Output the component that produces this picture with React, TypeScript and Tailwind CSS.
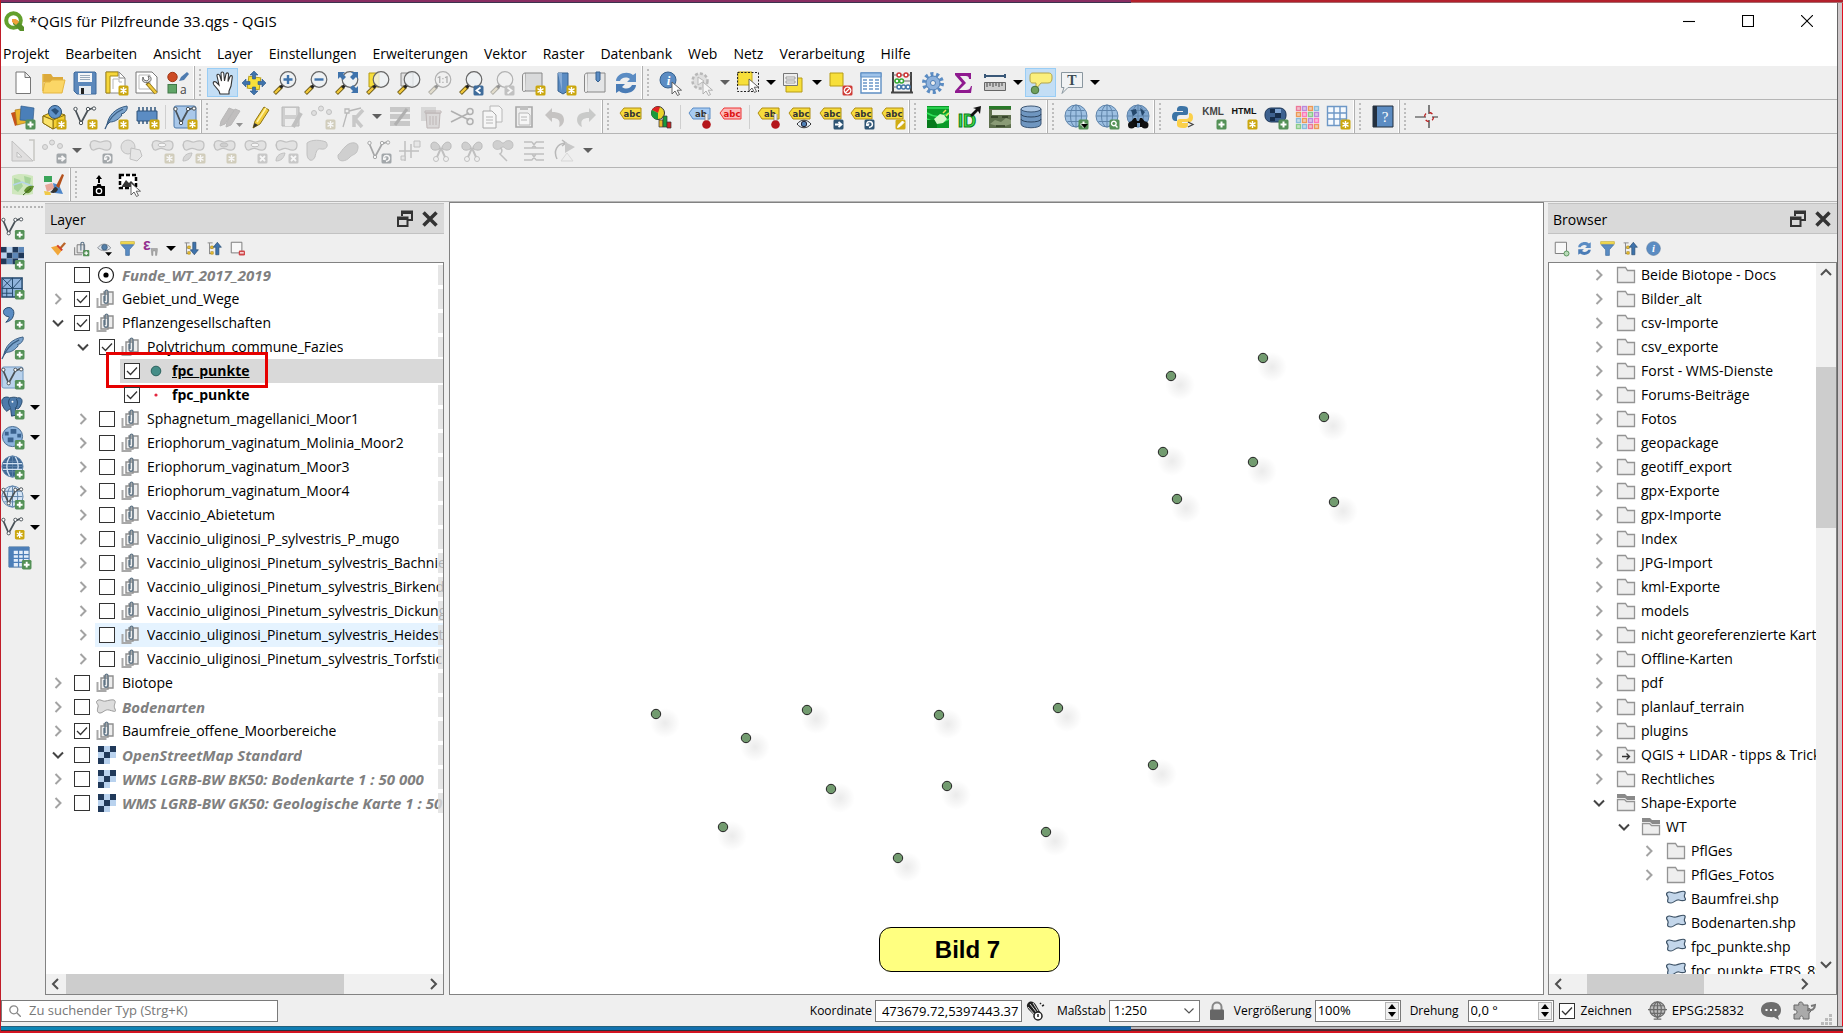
import React, { ReactNode } from 'react';

/* ---------- drawing helpers ---------- */

const BLUE = '#5b8cc3';
const NAVY = '#24476b';

type BadgeProps = { kind: 'plus' | 'star' | 'arrow' | 'cross' | 'turn' | 'pen' | 'prev' | 'next' | 'no' | 'lens' };

const badgeColors: Record<BadgeProps['kind'], string> = {
    plus: '#549157',
    star: '#cba70f',
    arrow: '#2f5574',
    cross: '#9a9a9a',
    turn: '#2f5574',
    pen: '#d0ac14',
    prev: '#3f6c9b',
    next: '#8a8a8a',
    no: '#cf3b36',
    lens: '#549157',
};

const badgeGlyphs: Record<BadgeProps['kind'], ReactNode> = {
    plus: <path d="M19.5 16.5v6M16.5 19.5h6" strokeWidth="2" />,
    star: <path d="M19.5 16v7M16.5 17.7l6 3.6M22.5 17.7l-6 3.6" strokeWidth="1.4" />,
    arrow: <path d="M16 19.5h6M19.5 16.8l3 2.7-3 2.7" strokeWidth="1.8" />,
    cross: <path d="M17 17l5 5M22 17l-5 5" strokeWidth="1.8" />,
    turn: <path d="M19 22.5c5-1 4-6 .5-6-3 0-3.5 3-1.5 4M19 18.5l-1 2-2-.5" strokeWidth="1.5" />,
    pen: <path d="M16.5 22.5l1-2.5 4-4 1.5 1.5-4 4z" strokeWidth="1" fill="#fff" />,
    prev: <path d="M21.5 16.5l-4 3 4 3" strokeWidth="1.8" />,
    next: <path d="M17.5 16.5l4 3-4 3" strokeWidth="1.8" />,
    no: <path d="M17.5 21.5l4-4M19.5 16.2a3.3 3.3 0 1 0 .1 0z" strokeWidth="1.2" />,
    lens: <path d="M18.8 16.2a2.3 2.3 0 1 0 .1 0zM20.5 20.5l2 2" strokeWidth="1.4" />,
};

const Badge = ({ kind }: BadgeProps) => (
    <g>
        <rect x="14.5" y="14.5" width="10" height="10" rx="1.5" fill={badgeColors[kind]} />
        <g stroke="#fff" fill="none">{badgeGlyphs[kind]}</g>
    </g>
);

const Lens = ({ children }: { children?: ReactNode }) => (
    <g>
        <path d="M8.5 15.5l-7 7" stroke="#6b5a18" strokeWidth="4" />
        <path d="M7 17l-5 5" stroke="#f3c93c" strokeWidth="2.4" />
        <path d="M10.5 13.5l-3 3" stroke="#222" strokeWidth="3" />
        <circle cx="15" cy="8.5" r="7.8" fill="#eef1f4" fillOpacity=".8" stroke="#666" strokeWidth="1.2" />
        {children}
    </g>
);

const Cursor = () => <path d="M13 11v12l3-3 2.5 4.5 2-1-2.3-4.3h4.3z" fill="#fff" stroke="#555" strokeWidth=".9" />;

const Tag = ({ fill = '#f6da3c', stroke = '#b08d10', color = '#333', text = 'abc' }) => (
    <g>
        <path d="M1 8l4-5h17v11H5z" fill={fill} stroke={stroke} />
        <text x="13" y="11.5" textAnchor="middle" fontSize="8.5" fontWeight="700" fill={color} className="font-['DejaVu_Sans',sans-serif]">{text}</text>
    </g>
);

const Pin = () => (
    <g>
        <path d="M18.5 9v9" stroke="#eee" strokeWidth="3" />
        <path d="M17 9v8M20 9v8" stroke="#888" strokeWidth=".8" />
        <circle cx="18.5" cy="19.5" r="4.3" fill="#b4161b" />
    </g>
);

const Vee = () => (
    <g fill="none" stroke="#4a5258" strokeWidth="1.8">
        <path d="M2 4l6 14 7-13 5-2" />
        <g fill="#fff" strokeWidth="1"><circle cx="2.5" cy="4" r="1.7" /><circle cx="8" cy="18" r="1.7" /><circle cx="15" cy="4" r="1.7" /><circle cx="21" cy="3.5" r="1.7" /></g>
    </g>
);

const Feather = () => <>
    <path d="M3 20C4 11 11 3 23 1c1 3-1 5-3 7l-3 1 1 1c-3 4-7 7-12 7z" fill="#7ba3cc" stroke="#395d83" />
    <path d="M1 24C4 16 10 8 19 4" fill="none" stroke="#395d83" strokeWidth="1.3" />
</>;

const Globe = ({ fill = '#9dc0e2' }) => (
    <g stroke="#5f84aa" fill="none">
        <circle cx="12" cy="11" r="11" fill={fill} />
        <path d="M12 .5v21M1.5 11h21M3.5 5.5h17M3.5 16.5h17" />
        <ellipse cx="12" cy="11" rx="5.5" ry="11" />
    </g>
);

const Blob = ({ y = 0 }) => (
    <path d={`M3 ${3 + y}c4-4 7 1 10 0s10-3 10 3-5 6-9 4-5 0-8 1-5-5-3-8z`} fill="#d3d3d3" stroke="#8b8b8b" strokeWidth="1.3" />
);

const D = '#20395a', M = '#5d87b8', L = '#b9d2ee';

const checker = (colors: string[], columns: number, cell: number) =>
    colors.map((c, i) => <rect key={i} x={(i % columns) * cell} y={1 + Math.floor(i / columns) * cell} width={cell} height={cell} fill={c} />);

const dots = <g fill="#ccc" stroke="#888"><circle cx="3" cy="8" r="2.5" /><circle cx="10" cy="3.5" r="2.5" /><circle cx="18" cy="7" r="2.5" /></g>;

/* ---------- toolbar icons, all on a 24 x 24 grid ---------- */

const icons: Record<string, ReactNode> = {
    new: <path d="M5 1h9l5.5 5.5V22.5H5zM14 1v5.5h5.5" fill="#fff" stroke="#777" />,
    open: <><path d="M1 3h8l2 3h10v5H1z" fill="#dca93a" /><path d="M1 3v19h19l3-13H10L8 11H3L1 20z" fill="#fbd666" stroke="#e5b640" /></>,
    save: <><path d="M2 1h20l1 1v21H4l-3-3V2z" fill="#5c88bb" stroke="#3f6a9c" /><path d="M5 2h14v9H5z" fill="#f4f6f8" /><path d="M7 4.5h10M7 6.5h10M7 8.5h10" stroke="#9ab" /><path d="M6 15h12v8H6z" fill="#e6ebf0" /><path d="M8 17h3v6H8z" fill="#222" /></>,
    newLayout: <><path d="M2 1h13l6 6v15H2z" fill="#fff" stroke="#888" /><path d="M2 1h12v4H6v17H2z" fill="#f6d63a" stroke="#a78a14" /><path d="M9 8h6v3h3M9 8v10" fill="none" stroke="#b5b5b5" /><path d="M15 1v6h6" fill="none" stroke="#888" /><Badge kind="star" /></>,
    layouts: <><path d="M1 1h16l5 5v16H1z" fill="#fff" stroke="#777" /><path d="M4 4h11v14H4z" fill="none" stroke="#bbb" /><path d="M12 12l9 10" stroke="#8a7014" strokeWidth="4" /><path d="M13 13l8 9" stroke="#f0c93c" strokeWidth="2.5" /><path d="M8 6l1 3 3 1 2-2-1-3c4 0 4 5 1 6-5 2-8-1-6-5z" fill="#ddd" stroke="#555" strokeWidth=".8" /></>,
    style: <><circle cx="6.5" cy="6" r="4.7" fill="#cd4b24" stroke="#a13615" /><rect x="2" y="13.5" width="8.5" height="8.5" fill="#60a568" stroke="#427848" /><path d="M13 10l2-4 6-5 2 2-5 6z" fill="#4f7cb0" /><text x="14" y="22.5" fontSize="12" fill="#444" className="font-['Open_Sans',sans-serif]">a</text></>,
    pan: <path d="M9 23l-1-3-5-6c-2-3 0-4 2-3l3 3L6 5c-.5-2 2-2.5 2.7-.6L10.5 10 10 2.5c0-2 2.5-2 2.800 0l.7 7.5L15 3c.5-1.8 2.7-1.3 2.5.5L17 10.5l2-5c.7-1.5 2.600-1 2.300.7L20 15l-2 5v3z" fill="#fff" stroke="#333" strokeWidth="1.1" />,
    panSel: <><path d="M6 6h12v12H6z" fill="#f7df3a" stroke="#b79c17" transform="rotate(8 12 12)" /><path d="M12 0l4 4h-2.5v4h-3V4H8zM12 24l4-4h-2.5v-4h-3v4H8zM0 12l4-4v2.5h4v3H4V16zM24 12l-4-4v2.5h-4v3h4V16z" fill="#3f73ac" stroke="#2a5686" strokeWidth=".6" /></>,
    zoomIn: <Lens><path d="M15 4v9M10.5 8.5h9" stroke="#3f73ac" strokeWidth="2.4" /></Lens>,
    zoomOut: <Lens><path d="M10.5 8.5h9" stroke="#3f73ac" strokeWidth="2.4" /></Lens>,
    zoomFull: <><Lens /><path d="M3 1h7L8 3l3 3-3 3-3-3-2 2zM23 1h-7l2 2-3 3 3 3 3-3 2 2zM23 22h-7l2-2-3-3 3-3 3 3 2-2z" fill="#3f73ac" /></>,
    zoomSel: <><path d="M3 2h10v14H3z" fill="#f7df3a" stroke="#b79c17" /><Lens /></>,
    zoomLayer: <><path d="M4 2h12v13H4z" fill="#e0e0e0" stroke="#888" /><Lens /></>,
    zoomNative: <Lens><text x="15" y="12" textAnchor="middle" fontSize="8.5" fontWeight="700" fill="#555" className="font-['Roboto',sans-serif]">1:1</text></Lens>,
    zoomPrev: <><Lens /><Badge kind="prev" /></>,
    zoomNext: <><Lens /><Badge kind="next" /></>,
    newMap: <><path d="M4 2h17v18H4z" fill="#d9dadb" stroke="#888" /><path d="M4 2c-2 0-2.5 2-2.5 3v14c0 2 3 2 3 0" fill="#eee" stroke="#888" /><Badge kind="star" /></>,
    newBookmark: <><path d="M6 2h10v18l-5 3-5-3z" fill={BLUE} stroke="#36618f" /><path d="M6 2h4v18" fill="#86abd6" /><Badge kind="star" /></>,
    bookmarks: <><path d="M4 2h18v19H4z" fill="#e4e5e6" stroke="#888" /><path d="M4 2c-2 0-2.5 2-2.5 3v15c0 2 3 2 3 0" fill="#eee" stroke="#888" /><path d="M13 1h4v8l-2 2-2-2z" fill={BLUE} stroke="#36618f" /></>,
    refresh: <><path d="M2 10C2 3 13-1 19 4l3-2v9h-9l3-3c-4-3-9-1-10 2z" fill={BLUE} /><path d="M22 14c0 7-11 11-17 6l-3 2v-9h9l-3 3c4 3 9 1 10-2z" fill="#4a7cb6" /></>,
    identify: <><circle cx="9" cy="9" r="8" fill={BLUE} stroke="#36618f" /><text x="9.5" y="14" textAnchor="middle" fontSize="13" fontStyle="italic" fontWeight="700" fill="#fff" className="font-['Liberation_Serif',serif]">i</text><Cursor /></>,
    action: <><circle cx="10" cy="10" r="7.5" fill="#ccc" stroke="#777" strokeWidth="2.5" strokeDasharray="3 2" /><path d="M8 6l6 4-6 4z" fill="#fff" stroke="#777" /><Cursor /></>,
    select: <><path d="M2 1h14v13H2z" fill="#f7df3a" stroke="#c7a91c" /><path d="M1.5 1.5h21v19h-21z" fill="none" stroke="#222" strokeDasharray="2 1.5" /><g transform="translate(0 -3)"><Cursor /></g></>,
    selectForm: <><path d="M8 7h12v14H4v-6" fill="#f7df3a" stroke="#b79c17" /><path d="M1.5 2.5h14v12h-14z" fill="#eee" stroke="#777" /><path d="M4 6h9v2H4zM4 10h9v2H4z" fill="#fff" stroke="#888" strokeWidth=".8" /></>,
    deselect: <><path d="M2 2h13v13H2z" fill="#f7df3a" stroke="#b79c17" /><Badge kind="no" /></>,
    table: <><path d="M2 2h20v20H2z" fill="#fff" stroke="#5f8fc4" strokeWidth="1.4" /><path d="M2 2h20v4H2z" fill="#9fc3ea" stroke="#5f8fc4" /><path d="M4 9h4M10 9h4M16 9h4M4 12h4M10 12h4M16 12h4M4 15h4M10 15h4M16 15h4M4 18h4M10 18h4M16 18h4" stroke="#6b97c8" strokeWidth="1.3" /></>,
    abacus: <><path d="M3 1v20M21 1v20M1 21.5h22" stroke="#444" strokeWidth="2" /><path d="M3 4h18M3 10h18M3 16h18" stroke="#666" /><g fill="#fff" strokeWidth="1.5"><g stroke="#c33"><circle cx="9" cy="4" r="2" /><circle cx="16" cy="4" r="2" /></g><g stroke="#3a3"><circle cx="7" cy="10" r="2" /><circle cx="11.5" cy="10" r="2" /></g><g stroke="#47a"><circle cx="9" cy="16" r="2" /><circle cx="13.5" cy="16" r="2" /><circle cx="18" cy="16" r="2" /></g></g></>,
    gear: <><circle cx="12" cy="12" r="9" fill="none" stroke={BLUE} strokeWidth="4" strokeDasharray="3 2.655" /><circle cx="12" cy="12" r="7" fill="#8db1dc" stroke="#4c7db5" /><circle cx="12" cy="12" r="2.5" fill="#efefef" stroke="#4c7db5" /></>,
    sigma: <path d="M3 2h16v6h-2c0-2-1-3-3-3H8l6 7-7 7h7c3 0 4-1 5-4h1l-1 7H3v-2l7-8-7-8z" fill="#8f1a8f" />,
    measure: <><path d="M2 5h20M2 3v4M22 3v4" stroke="#3a5878" strokeWidth="2" /><path d="M1.5 11.5h21v8h-21z" fill="#ccc" stroke="#666" /><path d="M4 12v4M7 12v3M10 12v4M13 12v3M16 12v4M19 12v3" stroke="#444" /></>,
    mapTip: <><path d="M4 2h15c4 0 4 2 4 5s-1 5-4 5h-7l-5 6V12H4c-3 0-3-2-3-5s0-5 3-5z" fill="#fbef7c" stroke="#b3a44b" /><circle cx="6" cy="19" r="3.8" fill="#6fa05c" stroke="#47703b" /></>,
    annotation: <><path d="M1.5 1.5h21v15H8l-6 6 2-6H1.5z" fill="#f1f3f4" stroke="#8a979f" /><text x="12" y="14" textAnchor="middle" fontSize="14" fontWeight="700" fill="#3a4a54" className="font-['Liberation_Serif',serif]">T</text></>,

    dataSource: <><path d="M0 8l10-3 3 12-9 4z" fill="#c7521b" /><path d="M4 5l12-2 2 14-12 3z" fill="#ecb52d" stroke="#a9781a" strokeWidth=".7" /><path d="M10 1l13 2-1 13-13-1z" fill="#4a7fb9" stroke="#2f5b8c" strokeWidth=".7" /><Badge kind="plus" /></>,
    geopackage: <><path d="M1 11l11-5 11 4v8l-12 6-10-6z" fill="#f4cf32" stroke="#8a7010" /><circle cx="13" cy="7" r="6.5" fill="#5f92c8" stroke="#2a5078" /><path d="M9 5l4-2 4 3-3 4z" fill="#2a5078" /><path d="M1 11l10 4 12-5M11 15v9" fill="none" stroke="#8a7010" /><path d="M1 11l10 4v9L1 18z" fill="#fbe36a" stroke="#8a7010" /><Badge kind="star" /></>,
    shapefile: <><Vee /><Badge kind="star" /></>,
    spatialite: <><Feather /><Badge kind="star" /></>,
    memory: <><path d="M4 2v17M8 2v17M12 2v17M16 2v17M20 2v17" stroke="#31557c" strokeWidth="1.5" /><path d="M2 6h20v10H2z" fill={BLUE} stroke="#31557c" /><Badge kind="star" /></>,
    virtual: <><rect x="1" y="1" width="22" height="22" rx="2" fill="#a9c8ea" stroke="#4c79a9" /><Vee /><Badge kind="star" /></>,
    pencils: <><path d="M2 21l1-5L11 3l5 2-9 14zM8 22l1-5 8-13 5 2-9 14z" fill="#8d8484" stroke="#7a7272" /><path d="M18 18h7l-3.5 4z" fill="#222" /></>,
    edit: <><path d="M4 23l2-7L15 2l5 3-9 14z" fill="#f2cd3a" stroke="#8e7413" /><path d="M4 23l1.5-5 3.5 2z" fill="#333" /><path d="M8 17l9-14" stroke="#fff3a5" strokeWidth="1.5" /></>,
    saveEdits: <><path d="M2 2h17v19H2z" fill="#aaa" stroke="#777" /><path d="M5 3h11v7H5zM5 14h10v7H5z" fill="#eee" /><path d="M13 22l8-14" stroke="#888" strokeWidth="4" /></>,
    addPoint: <>{dots}<Badge kind="star" /></>,
    vertex: <><path d="M3 4h4v4H3zM5 8L1 22M7 6l12-3" fill="none" stroke="#777" strokeWidth="1.3" /><path d="M21 5L12 15M12 10v12M13 14l7 8" stroke="#999" strokeWidth="3.5" /></>,
    modify: <><path d="M2 2h20v5H2zM2 9h20v5H2zM2 16h20v5H2z" fill="#999" /><path d="M7 20L19 4" stroke="#666" strokeWidth="3" /></>,
    trash: <><path d="M2 2h15v14H2z" fill="#bbb" /><path d="M7 8h14l-1 15H8z" fill="#cbb" stroke="#a66" /><path d="M6 6h16v2H6zM11 11v9M14 11v9M17 11v9" stroke="#a66" fill="none" /></>,
    cut: <><path d="M1 6l18 9M1 17l18-9" stroke="#666" strokeWidth="1.6" /><circle cx="20" cy="6.5" r="3" fill="none" stroke="#666" strokeWidth="1.5" /><circle cx="20" cy="16.5" r="3" fill="none" stroke="#666" strokeWidth="1.5" /></>,
    copy: <><path d="M9 1h9l3 3v13H9z" fill="#fff" stroke="#777" /><path d="M2 6h9l4 4v13H2z" fill="#fff" stroke="#555" /><path d="M5 12h7M5 15h7M5 18h7" stroke="#777" /></>,
    paste: <><path d="M4 2h16v20H4z" fill="#eee" stroke="#555" strokeWidth="1.6" /><path d="M8 1h8v4H8z" fill="#888" /><path d="M7 8h9l2 2v10H7z" fill="#fff" stroke="#777" /><path d="M9 12h6M9 15h6" stroke="#777" /></>,
    undo: <path d="M2 10l7-7v4c7 0 12 2 12 8 0 3-2 6-5 7 2-7-1-9-7-9v4z" fill="#a08c80" />,
    redo: <path d="M22 10l-7-7v4C8 7 3 9 3 15c0 3 2 6 5 7-2-7 1-9 7-9v4z" fill="#9aa096" />,
    label: <Tag />,
    diagram: <><circle cx="8" cy="8" r="6.5" fill="#e9d32a" stroke="#333" /><path d="M8 8L2 5a6.5 6.5 0 0 1 8-3z" fill="#d22" /><path d="M8 8v6.5A6.5 6.5 0 0 1 2 5z" fill="#1a9a3c" /><path d="M9 15h4v7H9z" fill="#e9b72a" stroke="#333" strokeWidth=".7" /><path d="M13 11h4v11h-4z" fill="#1a9a3c" stroke="#333" strokeWidth=".7" /><path d="M17 17h4v6h-4z" fill="#c22" stroke="#333" strokeWidth=".7" /></>,
    labelBlue: <><Tag fill="#a7cbf2" stroke="#5a8cc6" text="ab" /><Pin /></>,
    labelRed: <Tag fill="#fbb9b9" stroke="#e33" color="#d11" />,
    labelPin: <><Tag text="ab" /><Pin /></>,
    labelShow: <><Tag /><path d="M9 19c4-5 10-5 14 0-4 5-10 5-14 0z" fill="#e8f0f8" stroke="#333" /><circle cx="16" cy="19" r="2.7" fill="#4f7fb4" stroke="#223" /></>,
    labelMove: <><Tag /><Badge kind="arrow" /></>,
    labelTurn: <><Tag /><Badge kind="turn" /></>,
    labelEdit: <><Tag /><Badge kind="pen" /></>,
    plug: <><path d="M1 1h22v22H1z" fill="#0a9a28" /><path d="M1 3h22M1 8c8 5 14 4 22 0M1 14c8 5 14 4 22 0" stroke="#32e05a" fill="none" strokeWidth="1.5" /><path d="M1 15h10v8H1z" fill="#067a1c" /><path d="M8 14l6-5 4 1 3 4-4 4-6 1z" fill="#d5f6c9" /><path d="M17 8l3-3M20 11l3-3" stroke="#e8e05a" strokeWidth="1.5" /></>,
    idTool: <><text x="1" y="22" fontSize="18" fontWeight="700" fill="#3fe04c" stroke="#0a7a1b" strokeWidth="1" className="font-['Liberation_Sans',sans-serif]">ID</text><path d="M13 10l6-6-3-1 8-2-1 8-2-3-6 6z" fill="#111" /></>,
    forest: <><path d="M1 1h22v22H1z" fill="#5d6f4d" /><path d="M1 1h22v3H1z" fill="#2a7a2a" /><path d="M4 5h19v5H4z" fill="#e5e8e0" /><path d="M2 19l5-4 6 2 5-4 5 2v4l-9 3z" fill="#8a9b76" /><path d="M3 12h7M14 12h6M8 21h9" stroke="#2c3b22" strokeWidth="1.5" /></>,
    database: <><path d="M2 4v15c0 5 20 5 20 0V4z" fill="#6f96c0" stroke="#3a5574" /><ellipse cx="12" cy="4" rx="10" ry="3" fill="#a9c4e2" stroke="#3a5574" /><path d="M2 9c0 4 20 4 20 0M2 14c0 4 20 4 20 0" fill="none" stroke="#2c4460" /></>,
    globeAdd: <><Globe /><Badge kind="plus" /><path d="M17 19h7l-3.5 4z" fill="#000" /></>,
    globeFind: <><Globe /><Badge kind="lens" /></>,
    globeBino: <><Globe fill="#7fa6cf" /><path d="M5 5l5-1 1 4-4 3zM14 3l5 4-3 4z" fill="#24476b" /><path d="M4 18l4-5h2l1 3h2l1-3h2l4 5v4h-6v-4h-3v4H4z" fill="#0c0c0c" /><circle cx="5.5" cy="20" r="3.5" fill="#111" /><circle cx="19" cy="20" r="3.5" fill="#111" /></>,
    python: <><path d="M11 1c-5 0-5 2-5 5h6v1H4c-4 0-4 9 0 9h2v-3c0-2 1-3 3-3h6c2 0 2-1 2-3V4c0-2-2-3-6-3z" fill="#3c74a6" /><path d="M12 23c5 0 5-2 5-5h-6v-1h8c4 0 4-9 0-9h-1v3c0 2-1 3-3 3H9c-2 0-3 1-3 3v3c0 2 2 3 6 3z" fill="#fbd04a" /><path d="M17 17l5 2.5-5 2.5" fill="none" stroke="#444" strokeWidth="1.3" /></>,
    kml: <><text x="11" y="10" textAnchor="middle" fontSize="10" fontWeight="700" fill="#444" className="font-['Liberation_Sans',sans-serif]">KML</text><Badge kind="plus" /></>,
    html: <><text x="11" y="9" textAnchor="middle" fontSize="9" fontWeight="700" fill="#111" className="font-['Liberation_Sans',sans-serif]">HTML</text><Badge kind="star" /></>,
    mask: <><rect x="1" y="3" width="21" height="14" rx="6" fill="#3d618f" stroke="#1d3657" /><path d="M6 4h5v4H6zM11 8h6v5h-6zM6 12h5v4H6z" fill="#162e4c" /><path d="M11 4h6v4h-6z" fill="#7ea4d2" /><Badge kind="plus" /></>,
    tiles: <g strokeWidth="1.3" fill="#fff">{['#e79', '#b8d', '#e95', '#8bd', '#e95', '#f7b', '#8c8', '#b8d', '#8bd', '#e95', '#b8d', '#f7b', '#8c8', '#8bd', '#e79', '#e95'].map((c, i) => <rect key={i} x={1.5 + (i % 4) * 6} y={1.5 + Math.floor(i / 4) * 6} width="4" height="4" stroke={c} fill={c} fillOpacity=".4" />)}</g>,
    gridNew: <><path d="M1.5 1.5h19v19h-19zM8 1.5v19M14 1.5v19M1.5 8h19M1.5 14h19" fill="#f5f9fd" stroke="#6d97c6" strokeWidth="1.4" /><Badge kind="star" /></>,
    help: <><path d="M2 1h20v21H2z" fill="#5c8cc2" stroke="#222e3c" /><path d="M2 1h4v21H2z" fill="#24303f" /><text x="14" y="17" textAnchor="middle" fontSize="15" fill="#fff" className="font-['Liberation_Serif',serif]">?</text></>,
    cross: <><path d="M13 0v9M13 15v8M-1 12H10M16 12h6" stroke="#333" strokeWidth="1.2" /><circle cx="13" cy="12" r="4.5" fill="none" stroke="#b22" strokeWidth="1.3" strokeDasharray="3.5 3.5" /></>,

    triangle: <><path d="M1 2v20h21z" fill="#d9caca" stroke="#888" /><path d="M6 13v5h5z" fill="#efefef" stroke="#888" /><path d="M18 1h5v21" fill="none" stroke="#997" strokeWidth="1.5" /></>,
    movePoint: <>{dots}<Badge kind="arrow" /></>,
    rotate: <><Blob /><Badge kind="turn" /></>,
    simplify: <><circle cx="9" cy="8" r="7" fill="#ccc" stroke="#888" /><path d="M12 9l9 2 2 6-5 5-7-2z" fill="#ddd" stroke="#888" /></>,
    ring: <><Blob /><ellipse cx="12" cy="6" rx="4" ry="1.800" fill="#fff" stroke="#888" /><Badge kind="star" /></>,
    part: <><Blob /><path d="M2 22c0-6 5-8 9-8-1 5-4 8-9 8z" fill="#bbb" stroke="#888" /><Badge kind="star" /></>,
    fillRing: <><Blob /><ellipse cx="12" cy="6" rx="4" ry="2" fill="#aaa" stroke="#888" /><Badge kind="star" /></>,
    delRing: <><Blob /><ellipse cx="12" cy="6" rx="4" ry="1.800" fill="#fff" stroke="#888" /><Badge kind="cross" /></>,
    delPart: <><Blob /><path d="M2 22c0-6 5-8 9-8-1 5-4 8-9 8z" fill="#bbb" stroke="#888" /><Badge kind="cross" /></>,
    reshape: <path d="M2 4c5-4 14-3 19-1 3 4 0 8-5 7-4-1-5 3-6 8-3 6-8 3-8-3z" fill="#bbb" stroke="#888" />,
    offset: <path d="M2 16c3-2 4-6 8-9 5-5 13-4 12 2-1 7-5 6-8 9-4 5-13 6-12-2z" fill="#aaa" stroke="#888" />,
    splitParts: <><Vee /><Badge kind="turn" /></>,
    split: <><path d="M7 2v20M1 12h20M13 5v14" stroke="#888" strokeWidth="1.5" /><path d="M16 2h6v6h-6zM3 17h4v4H3z" fill="#ddd" stroke="#888" /></>,
    scissors: <><path d="M11 8C8 1 1 2 2 8c0 4 7 4 9 1zM13 8c3-7 10-6 9 0 0 4-7 4-9 1z" fill="#aaa" stroke="#777" /><path d="M12 9l-4 9M12 9l4 9" stroke="#888" strokeWidth="2" /><circle cx="7" cy="20" r="2.5" fill="none" stroke="#888" /><circle cx="17" cy="20" r="2.5" fill="none" stroke="#888" /></>,
    merge: <><path d="M2 6c0-6 8-5 9-2h2c1-3 9-4 9 2s-8 5-9 2h-2c-1 3-9 4-9-2z" fill="#aaa" stroke="#888" /><path d="M9 9c3 1 2 5 0 6l7 7" fill="none" stroke="#888" strokeWidth="1.5" /></>,
    lines: <path d="M2 3h8M14 3h8M2 9h20M2 15h20M2 21h8M14 21h8M10 3l4 6M14 3l-4 6M10 15l4 6M14 15l-4 6" stroke="#888" strokeWidth="1.4" />,
    rotSym: <><path d="M4 20C0 12 4 5 12 4M9 1l4 3-4 3" fill="none" stroke="#777" strokeWidth="1.5" /><path d="M12 3l10 5-10 6z" fill="#999" /><path d="M8 22l6-8 6 8z" fill="#eee" stroke="#bbb" /></>,

    osm: <><path d="M1 3c6-3 14-2 21 0v18c-7 2-14 1-21 0z" fill="#cfe7bd" /><path d="M3 5l6 2 3 6-5 6-4-3zM13 3l7 2-1 6-5-1z" fill="#a7d39a" /><path d="M2 12l9-3 10 4" fill="none" stroke="#b5d4e8" strokeWidth="1.5" /><path d="M13 18c2-5 6-6 10-5-2 6-5 8-8 7z" fill="#5f8f2e" /><path d="M12 22l8-7" stroke="#3c5f1b" /></>,
    palette: <><path d="M2 3h8v6H2z" fill="#3aa55a" /><path d="M3 12l7-2 3 5-8 4z" fill="#e8a79a" /><path d="M11 10l6 2 4 9-8-1z" fill="#4d86c9" /><path d="M2 18l6 1 1 3H3z" fill="#f0c945" /><path d="M8 19c3-1 3-5 6-5l2 2c-1 4-5 5-8 3z" fill="#333" /><path d="M14 13l6-12 2 1-5 13z" fill="#b5521d" /></>,
    camera: <><path d="M12 2l3 4h-2v4h-2V6H9z" /><path d="M9.500 13l1-2h3l1 2h3.500v10H6V13z" /><circle cx="12" cy="18" r="3.3" fill="#fff" /><circle cx="12" cy="18" r="2" /></>,
    pickImage: <><path d="M2 2h16v13H2z" fill="#fff" stroke="#000" strokeWidth="2.5" strokeDasharray="4 2" /><path d="M4 13l4-6 3 3 2-2 4 4v2H4z" fill="#333" /><g transform="translate(0 -1)"><Cursor /></g></>,

    vecAdd: <><Vee /><Badge kind="plus" /></>,
    rasAdd: <>{checker([D, L, D, M, L, D, M, D, D, M, D, L], 4, 6)}<Badge kind="plus" /></>,
    meshAdd: <><path d="M1 2h21v20H1z" fill="#8fb3dc" stroke="#24476b" strokeWidth="1.5" /><path d="M1 13h21M12 2v20M1 2l11 11M12 2L1 13M22 2L12 13M6 13v9M1 18h11" stroke="#24476b" fill="none" /><Badge kind="plus" /></>,
    commaAdd: <><path d="M4 3c6-4 11 1 9 7-1 4-4 6-8 7 3-3 4-5 3-6C3 11 1 6 4 3z" fill={BLUE} stroke={NAVY} /><Badge kind="plus" /></>,
    featherAdd: <><Feather /><Badge kind="plus" /></>,
    virtualAdd: <><rect x="1" y="1" width="22" height="22" rx="2" fill="#b9d2ec" stroke="#6f95bf" /><Vee /><Badge kind="plus" /></>,
    postgisAdd: <><path d="M1 4c2-4 7-3 8-2 3-1 6-1 8 0 5-1 6 3 4 7s-3 5-5 4l-1-1 1 8-5 1-1-8-4 3C3 14 0 8 1 4z" fill="#4d7aaa" stroke={NAVY} /><path d="M9 3c-2 3-1 6 1 9M16 3c2 3 1 6 0 9" fill="none" stroke={NAVY} /><circle cx="12" cy="6" r="1" fill="#fff" /><Badge kind="plus" /></>,
    wmsAdd: <><circle cx="12" cy="11" r="10.5" fill="#8db4dd" stroke="#44698f" /><path d="M4 6h4v4H4zM10 3h6v5h-6zM17 8h4v4h-4zM7 12h6v5H7z" fill="#3b628e" /><Badge kind="plus" /></>,
    wcsAdd: <><Globe fill="#3a6491" /><path d="M2 8h20M2 14h20M9 1c-4 6-4 14 0 20M15 1c4 6 4 14 0 20" fill="none" stroke="#cfe0f2" strokeWidth="1.3" /><Badge kind="plus" /></>,
    wfsAdd: <><Globe fill="#d6e5f5" /><Vee /><Badge kind="plus" /></>,
    vecNew: <><Vee /><Badge kind="star" /></>,
    tableAdd: <><path d="M1 1h21v21H1z" fill="#e4eefa" stroke="#3f6c9b" /><path d="M1 1h21v4H1zM1 1h5v21H1z" fill="#4d7fb8" /><path d="M11 1v21M16 1v21M1 9h21M1 13h21M1 17h21" stroke="#4d7fb8" strokeWidth="1.3" /><Badge kind="plus" /></>,

    broom: <><path d="M13 11l8-9 3 2-8 9z" fill="#b9642a" /><path d="M0 10l11-3 7 7-7 9z" fill="#f1a73a" /><path d="M10 7l8 8" stroke="#d2402c" strokeWidth="3" /></>,
    groupAdd: <><path d="M5 6h12v13H5z" fill="#e5e5e5" stroke="#777" strokeWidth="1.5" /><path d="M11 15V5c0-4 5-4 5 0v12" fill="none" stroke="#5c7388" strokeWidth="1.8" /><path d="M1 10v12h12" fill="none" stroke="#888" strokeWidth="1.8" /><Badge kind="plus" /></>,
    eye: <><path d="M1 11c6-8 15-8 21 0-6 6-15 6-21 0z" fill="#dfe6ee" stroke="#8a8f95" strokeWidth="1.5" /><circle cx="12" cy="10" r="4.5" fill="#547fa8" stroke="#33526f" /><path d="M13 18h11l-5.5 6z" fill="#000" /></>,
    funnel: <><path d="M1 1h22v4H1z" fill="#f6dd55" stroke="#bfa62f" /><path d="M2 6h20l-7 8v9H9v-9z" fill={BLUE} stroke="#3a689c" /></>,
    epsilon: <><text x="0" y="15" fontSize="26" fontWeight="700" fill="#93308f" className="font-['Liberation_Sans',sans-serif]">ε</text><path d="M13 12h10v3l-1 8h-2v-7h-4v7h-2z" fill="#aaa" stroke="#777" strokeWidth=".6" /></>,
    expand: <><path d="M1 3h8M4 3v18M4 11h5M4 20h5" stroke="#888" strokeWidth="1.5" fill="none" /><path d="M6 8h4v4H6zM6 17h4v4H6z" fill="#f2c632" stroke="#a9861a" /><path d="M14 2h5v12h4l-6.5 8L10 14h4z" fill="#3f73ac" stroke="#24476b" /></>,
    collapse: <><path d="M1 3h8M4 3v18M4 11h5M4 20h5" stroke="#888" strokeWidth="1.5" fill="none" /><path d="M6 8h4v4H6zM6 17h4v4H6z" fill="#f2c632" stroke="#a9861a" /><path d="M14 22h5V10h4L16.5 2 10 10h4z" fill="#3f73ac" stroke="#24476b" /></>,
    removeLayer: <><path d="M2 2h17v17H2z" fill="#f8f8f8" stroke="#777" strokeWidth="1.5" /><rect x="14" y="15" width="10" height="8" rx="2" fill="#d0474a" /><path d="M16 19h6" stroke="#fff" strokeWidth="2" /></>,
    addLayer: <><path d="M2 2h18v18H2z" fill="#f8f8f8" stroke="#777" strokeWidth="1.5" /><circle cx="20" cy="20" r="4" fill="#b9dbb9" stroke="#549157" strokeWidth="1.5" /></>,
    info: <><circle cx="12" cy="12" r="11" fill={BLUE} stroke="#5a7ba0" /><text x="12" y="18" textAnchor="middle" fontSize="17" fontStyle="italic" fontWeight="700" fill="#fff" className="font-['Liberation_Serif',serif]">i</text></>,
};

const Glyph = ({ name, className = 'size-6' }: { name: string; className?: string }) => (
    <svg viewBox="0 0 24 24" className={`${className} shrink-0 overflow-visible`} aria-hidden="true">{icons[name]}</svg>
);

const DropArrow = () => <svg viewBox="0 0 10 5" className="h-[5px] w-[10px]"><path d="M0 0h10L5 5z" /></svg>;

/* ---------- toolbars ---------- */

// '|' starts a new toolbar, ':' is a thin separator, 'v' a drop-down arrow,
// a leading '-' is a disabled tool and a leading '*' a pressed one
const rows = [
    'new open save newLayout layouts style | *pan panSel zoomIn zoomOut zoomFull zoomSel zoomLayer -zoomNative zoomPrev -zoomNext newMap newBookmark bookmarks refresh | identify -action -v select v selectForm v deselect table abacus gear sigma measure v *mapTip annotation v',
    'dataSource geopackage shapefile spatialite memory : virtual | -pencils edit -saveEdits -addPoint -vertex -v -modify -trash -cut -copy -paste -undo -redo | label diagram : labelBlue labelRed : labelPin labelShow labelMove labelTurn labelEdit | plug idTool forest database | globeAdd globeFind globeBino | python kml html mask tiles gridNew | help | cross',
    '-triangle -movePoint -v -rotate -simplify -ring -part -fillRing -delRing -delPart -reshape -offset -splitParts -split -scissors -scissors -merge -lines -rotSym -v',
    'osm palette | camera pickImage',
];

const ToolItem = ({ item }: { item: string }) => {
    if (item === '|') {
        return <span className="flex h-full w-[14px] items-center gap-1 border-l border-white">
            <span className="h-full w-px bg-[#b0b0b0]" />
            <span className="h-[27px] border-l-2 border-dotted border-[#bdbdbd]" />
        </span>;
    }
    if (item === ':') return <span className="mx-[3px] h-6 w-px bg-[#cfcfcf]" />;

    const disabled = item.startsWith('-');
    const pressed = item.startsWith('*');
    const name = item.replace(/^[-*]/, '');
    if (name === 'v') {
        return <button aria-label="Mehr" disabled={disabled} className="flex w-[15px] justify-center disabled:opacity-60"><DropArrow /></button>;
    }
    return <button
        aria-label={name}
        aria-pressed={pressed}
        disabled={disabled}
        className={`flex h-[29px] w-[31px] items-center justify-center disabled:opacity-45 disabled:grayscale-75 ${pressed ? 'border border-[#99cdf5] bg-[#c3def5]' : ''}`}
    >
        <Glyph name={name} />
    </button>;
};

const sideTools = ['vecAdd', 'rasAdd', 'meshAdd', 'commaAdd', 'featherAdd', 'virtualAdd', 'postgisAdd v', 'wmsAdd v', 'wcsAdd', 'wfsAdd v', 'vecNew v', 'tableAdd'];

const SideBar = () => (
    <div className="flex w-11 shrink-0 flex-col">
        <div className="mx-[2px] mt-1 mb-1 border-t-2 border-dotted border-[#b5b5b5]" />
        {sideTools.map((tool) => {
            const [name, menu] = tool.split(' ');
            return <div key={name} className={`flex h-[30px] items-center gap-[6px] ${name === 'tableAdd' ? 'pl-[7px]' : ''}`}>
                <button aria-label={name}><Glyph name={name} className="size-[23px]" /></button>
                {menu && <button aria-label="Mehr"><DropArrow /></button>}
            </div>;
        })}
    </div>
);

/* ---------- shared tree parts ---------- */

const Chevron = ({ open }: { open: boolean }) => (
    <svg viewBox="0 0 12 12" className="size-3" fill="none" strokeWidth="2">
        {open ? <path d="M1 3.5l5 5 5-5" stroke="#444" /> : <path d="M3.5 1l5 5-5 5" stroke="#a3a3a3" />}
    </svg>
);

const Check = ({ id, checked }: { id: string; checked: boolean }) => (
    <span className="relative flex size-4 shrink-0">
        <input id={id} type="checkbox" defaultChecked={checked} className="peer size-4 appearance-none border border-[#333] bg-white" />
        <svg viewBox="0 0 16 16" className="pointer-events-none absolute inset-0 hidden size-4 peer-checked:block" fill="none" stroke="#333" strokeWidth="1.3">
            <path d="M3 8l3.500 3.500L13 4.500" />
        </svg>
    </span>
);

const DockHeader = ({ title }: { title: string }) => (
    <div className="mt-px flex h-[31px] shrink-0 items-center border-y border-[#c2c2c2] bg-[#d9d9d9] pr-[6px] pl-[5px]">
        <h2 className="flex-1 pt-[2px]">{title}</h2>
        <button aria-label="Abdocken" className="mr-[9px]">
            <svg viewBox="0 0 16 17" className="h-[17px] w-4" fill="none" stroke="#333" strokeWidth="2"><path d="M5 6V1.500h10V10h-4M5 3h10" /><path d="M1 7.500h9.500V16H1zM1 9h9" /></svg>
        </button>
        <button aria-label="Schließen">
            <svg viewBox="0 0 16 16" className="size-4" stroke="#333" strokeWidth="3.500"><path d="M1.500 1.500l13 13M14.500 1.500l-13 13" /></svg>
        </button>
    </div>
);

const arrows = {
    left: 'M8 1L3 6l5 5',
    right: 'M4 1l5 5-5 5',
    up: 'M1 8l5-5 5 5',
    down: 'M1 4l5 5 5-5',
};

const ScrollArrow = ({ dir }: { dir: keyof typeof arrows }) => (
    <button aria-label={dir} className="flex size-5 shrink-0 items-center justify-center">
        <svg viewBox="0 0 12 12" className="size-3" fill="none" stroke="#505050" strokeWidth="2"><path d={arrows[dir]} /></svg>
    </button>
);

const DockTools = ({ names }: { names: string[] }) => (
    <div className="flex h-7 shrink-0 items-center gap-2 pl-[6px]">
        {names.map((n) => <button key={n} aria-label={n}>{n === 'v' ? <DropArrow /> : <Glyph name={n} className="size-[15px]" />}</button>)}
    </div>
);

/* ---------- layer panel ---------- */

type LayerRow = {
    name: string;
    level: number;
    kind: 'group' | 'raster' | 'polygon' | 'radio' | 'dot' | 'red';
    open?: boolean;
    leaf?: boolean;
    checked?: boolean;
    style?: 'off' | 'bold' | 'current';
    hover?: boolean;
};

const layers: LayerRow[] = [
    { name: 'Funde_WT_2017_2019', level: 0, kind: 'radio', leaf: true, style: 'off' },
    { name: 'Gebiet_und_Wege', level: 0, kind: 'group', checked: true },
    { name: 'Pflanzengesellschaften', level: 0, kind: 'group', open: true, checked: true },
    { name: 'Polytrichum_commune_Fazies', level: 1, kind: 'group', open: true, checked: true },
    { name: 'fpc_punkte', level: 2, kind: 'dot', leaf: true, checked: true, style: 'current' },
    { name: 'fpc_punkte', level: 2, kind: 'red', leaf: true, checked: true, style: 'bold' },
    { name: 'Sphagnetum_magellanici_Moor1', level: 1, kind: 'group' },
    { name: 'Eriophorum_vaginatum_Molinia_Moor2', level: 1, kind: 'group' },
    { name: 'Eriophorum_vaginatum_Moor3', level: 1, kind: 'group' },
    { name: 'Eriophorum_vaginatum_Moor4', level: 1, kind: 'group' },
    { name: 'Vaccinio_Abietetum', level: 1, kind: 'group' },
    { name: 'Vaccinio_uliginosi_P_sylvestris_P_mugo', level: 1, kind: 'group' },
    { name: 'Vaccinio_uliginosi_Pinetum_sylvestris_Bachnied', level: 1, kind: 'group' },
    { name: 'Vaccinio_uliginosi_Pinetum_sylvestris_Birkendorf', level: 1, kind: 'group' },
    { name: 'Vaccinio_uliginosi_Pinetum_sylvestris_Dickung', level: 1, kind: 'group' },
    { name: 'Vaccinio_uliginosi_Pinetum_sylvestris_Heidestadium', level: 1, kind: 'group', hover: true },
    { name: 'Vaccinio_uliginosi_Pinetum_sylvestris_Torfstich', level: 1, kind: 'group' },
    { name: 'Biotope', level: 0, kind: 'group' },
    { name: 'Bodenarten', level: 0, kind: 'polygon', style: 'off' },
    { name: 'Baumfreie_offene_Moorbereiche', level: 0, kind: 'group', checked: true },
    { name: 'OpenStreetMap Standard', level: 0, kind: 'raster', open: true, style: 'off' },
    { name: 'WMS LGRB-BW BK50: Bodenkarte 1 : 50 000', level: 0, kind: 'raster', style: 'off' },
    { name: 'WMS LGRB-BW GK50: Geologische Karte 1 : 50 000', level: 0, kind: 'raster', style: 'off' },
];

const layerIcons: Record<LayerRow['kind'], ReactNode> = {
    group: <g fill="none" stroke="#8f8f8f" strokeWidth="1.4"><path d="M8 3h9v12H8z" fill="#ededed" /><path d="M5 5h7v11H5z" fill="#ededed" /><path d="M1.500 9v9h9" stroke="#a8a8a8" strokeWidth="2" /><path d="M8 7v5c0 3 4 3 4 0V3c0-2.500-3-2.500-3 0v9" stroke="#5f7485" strokeWidth="1.3" /></g>,
    raster: <g transform="translate(2 0)">{checker([D, L, D, L, D, L, D, L, 'none'], 3, 6)}</g>,
    polygon: <path d="M1 4c3-3 5 1 9 0s8-2 9 0-2 4 0 8-2 2-6 1-6 3-9 3-3-3-2-6-3-4-1-6z" fill="#ddd" stroke="#999" />,
    radio: <><circle cx="10" cy="10" r="7.500" fill="#fff" stroke="#222" strokeWidth="1.2" /><circle cx="10" cy="10" r="2.600" /></>,
    dot: <circle cx="10" cy="10" r="4.800" fill="#458d87" stroke="#2b625e" />,
    red: <circle cx="10" cy="10" r="1.600" fill="#e3263f" />,
};

const nameStyles = {
    off: "font-['Noto_Sans',sans-serif] text-[15px] font-bold italic text-[#808080]",
    bold: 'font-bold',
    current: 'font-bold underline',
};

const LayerItem = ({ layer, index }: { layer: LayerRow; index: number }) => {
    const indent = ['', 'pl-[25px]', 'pl-[50px]'][layer.level];
    const bg = layer.style === 'current' ? 'bg-[#d9d9d9]' : layer.hover ? 'bg-[#e5f3ff]' : '';
    return <li className={`relative flex h-6 items-center ${indent}`}>
        <button aria-label="Aufklappen" className="flex w-6 shrink-0 justify-center">{!layer.leaf && <Chevron open={!!layer.open} />}</button>
        <div className={`flex h-full min-w-0 flex-1 items-center pl-1 ${bg}`}>
            <Check id={`layer-${index}`} checked={!!layer.checked} />
            <svg viewBox="0 0 20 20" className="mx-[6px] size-5 shrink-0">{layerIcons[layer.kind]}</svg>
            <label htmlFor={`layer-${index}`} className={`overflow-hidden whitespace-nowrap ${layer.style ? nameStyles[layer.style] : ''}`}>{layer.name}</label>
        </div>
        {layer.style !== 'current' && <span className="absolute right-0 h-5 w-[5px] bg-[#dedede]/80" />}
        {layer.style === 'current' && <span className="absolute -top-[7px] left-[60px] h-9 w-[162px] border-3 border-[#e60000]" />}
    </li>;
};

const LayerPanel = () => (
    <section className="flex w-[399px] shrink-0 flex-col">
        <DockHeader title="Layer" />
        <DockTools names={['broom', 'groupAdd', 'eye', 'funnel', 'epsilon', 'v', 'expand', 'collapse', 'removeLayer']} />
        <div className="flex min-h-0 flex-1 flex-col border border-[#828282] bg-white">
            <ul className="min-h-0 flex-1 overflow-hidden">
                {layers.map((layer, i) => <LayerItem key={i} layer={layer} index={i} />)}
            </ul>
            <div className="flex h-5 shrink-0 bg-[#f0f0f0]">
                <ScrollArrow dir="left" />
                <div className="flex-1"><div className="h-full w-[78%] bg-[#cdcdcd]" /></div>
                <ScrollArrow dir="right" />
            </div>
        </div>
    </section>
);

/* ---------- map canvas ---------- */

const points = [
    [721, 173], [813, 155], [874, 214], [713, 249], [803, 259], [727, 296], [884, 299],
    [206, 511], [296, 535], [357, 507], [489, 512], [608, 505], [381, 586], [497, 583],
    [703, 562], [273, 624], [448, 655], [596, 629],
];

const MapCanvas = () => (
    <main className="relative mr-1 ml-[5px] min-w-0 flex-1 border border-[#828282] bg-white">
        <svg className="size-full">
            <defs>
                <radialGradient id="shade"><stop offset="0" stopColor="#000" stopOpacity=".08" /><stop offset="1" stopColor="#000" stopOpacity="0" /></radialGradient>
            </defs>
            {points.map(([x, y]) => <g key={`${x}-${y}`}>
                <circle cx={x + 9} cy={y + 9} r="15" fill="url(#shade)" />
                <circle cx={x} cy={y} r="4.700" fill="#729b6f" stroke="#232323" />
            </g>)}
        </svg>
        <div className="absolute bottom-[22px] left-[429px] flex h-[45px] w-[181px] items-center justify-center rounded-xl border border-black bg-[#ffff80] pr-1 font-['Liberation_Sans',sans-serif] text-2xl font-bold">Bild 7</div>
    </main>
);

/* ---------- browser panel ---------- */

type Entry = { name: string; level: number; kind: 'folder' | 'open' | 'link' | 'shape' };

const entries: Entry[] = [
    ...['Beide Biotope - Docs', 'Bilder_alt', 'csv-Importe', 'csv_exporte', 'Forst - WMS-Dienste', 'Forums-Beiträge', 'Fotos', 'geopackage', 'geotiff_export', 'gpx-Exporte', 'gpx-Importe', 'Index', 'JPG-Import', 'kml-Exporte', 'models', 'nicht georeferenzierte Karten', 'Offline-Karten', 'pdf', 'planlauf_terrain', 'plugins']
        .map((name): Entry => ({ name, level: 0, kind: 'folder' })),
    { name: 'QGIS + LIDAR - tipps & Tricks', level: 0, kind: 'link' },
    { name: 'Rechtliches', level: 0, kind: 'folder' },
    { name: 'Shape-Exporte', level: 0, kind: 'open' },
    { name: 'WT', level: 1, kind: 'open' },
    { name: 'PflGes', level: 2, kind: 'folder' },
    { name: 'PflGes_Fotos', level: 2, kind: 'folder' },
    { name: 'Baumfrei.shp', level: 2, kind: 'shape' },
    { name: 'Bodenarten.shp', level: 2, kind: 'shape' },
    { name: 'fpc_punkte.shp', level: 2, kind: 'shape' },
    { name: 'fpc_punkte_ETRS_89.shp', level: 2, kind: 'shape' },
];

const folder = <path d="M1.500 2.500h8l2 3h7v12h-17z" fill="#eee" stroke="#949494" strokeWidth="1.3" />;

const entryIcons: Record<Entry['kind'], ReactNode> = {
    folder,
    link: <>{folder}<path d="M6 11.500h7M10.500 8.500l3 3-3 3" fill="none" stroke="#333" strokeWidth="1.4" /></>,
    open: <><path d="M1 1h8l2 2h8v4h-8L9 5H1z" fill="#8a8a8a" /><path d="M1.500 6.500h7l2 2h8v9h-17z" fill="#eee" stroke="#949494" strokeWidth="1.3" /></>,
    shape: <path d="M1 4c3-3 5 1 9 0s8-3 9-1-2 3 0 6-3 3-6 2-5 3-8 3-4-1-3-4-3-4-1-6z" fill="#c3d6ea" stroke="#3d5266" strokeWidth="1.2" />,
};

const BrowserPanel = () => (
    <section className="flex w-[289px] shrink-0 flex-col">
        <DockHeader title="Browser" />
        <DockTools names={['addLayer', 'refresh', 'funnel', 'collapse', 'info']} />
        <div className="flex min-h-0 flex-1 flex-col border border-[#828282] bg-white">
            <div className="flex min-h-0 flex-1">
                <ul className="min-w-0 flex-1 overflow-hidden">
                    {entries.map((e) => <li key={e.name} className={`flex h-6 items-center ${['pl-[38px]', 'pl-[63px]', 'pl-[88px]'][e.level]}`}>
                        <button aria-label="Aufklappen" className="flex w-6 shrink-0 justify-center">{e.kind !== 'shape' && <Chevron open={e.kind === 'open'} />}</button>
                        <svg viewBox="0 0 20 20" className="mx-[5px] size-5 shrink-0">{entryIcons[e.kind]}</svg>
                        <span className="whitespace-nowrap">{e.name}</span>
                    </li>)}
                </ul>
                <div className="flex w-5 shrink-0 flex-col bg-[#f0f0f0]">
                    <ScrollArrow dir="up" />
                    <div className="flex flex-1 flex-col">
                        <div className="h-[12.5%]" />
                        <div className="h-[24%] bg-[#cdcdcd]" />
                    </div>
                    <ScrollArrow dir="down" />
                </div>
            </div>
            <div className="flex h-5 shrink-0 bg-[#f0f0f0] pr-[22px]">
                <ScrollArrow dir="left" />
                <div className="flex flex-1"><div className="ml-[8%] w-[52%] bg-[#cdcdcd]" /></div>
                <ScrollArrow dir="right" />
            </div>
        </div>
    </section>
);

/* ---------- status bar ---------- */

const Spin = ({ id, value }: { id: string; value: string }) => (
    <span className="flex h-[22px] w-[86px] border border-[#7a7a7a] bg-white text-[13px]">
        <input id={id} defaultValue={value} className="min-w-0 flex-1 pl-[2px] outline-none" />
        <span className="m-px flex w-[14px] flex-col items-center justify-center gap-[3px] border border-[#b5b5b5] bg-[#f0f0f0]">
            <svg viewBox="0 0 8 5" className="h-[5px] w-2"><path d="M0 5h8L4 0z" /></svg>
            <svg viewBox="0 0 8 5" className="h-[5px] w-2"><path d="M0 0h8L4 5z" /></svg>
        </span>
    </span>
);

const StatusBar = () => (
    <footer className="flex h-[31px] shrink-0 items-center text-xs">
        <label className="flex h-[22px] w-[277px] items-center gap-2 border border-[#7a7a7a] bg-white pl-[7px] text-[13px]">
            <svg viewBox="0 0 12 12" className="size-3" fill="none" stroke="#888" strokeWidth="1.3"><circle cx="4.800" cy="4.800" r="4" /><path d="M7.800 7.800l4 4" /></svg>
            <input aria-label="Suche" placeholder="Zu suchender Typ (Strg+K)" className="min-w-0 flex-1 outline-none placeholder:text-[#777]" />
        </label>
        <div className="flex-1" />
        <label htmlFor="coord" className="mr-[3px]">Koordinate</label>
        <input id="coord" defaultValue="473679.72,5397443.37" className="h-[22px] w-[147px] border border-[#7a7a7a] bg-white pl-[6px] text-[13px]" />
        <button aria-label="Mausanzeige" className="mx-[3px]">
            <svg viewBox="0 0 20 20" className="size-5"><path d="M3 2c3-3 6-1 8 2l4 7-5 4-6-6C2 7 1 4 3 2z" fill="#222" /><path d="M5 3l7 9M3 6l7 8M8 2l5 8" stroke="#eee" strokeWidth=".9" /><circle cx="13" cy="15" r="4" fill="#fff" stroke="#222" strokeWidth="1.5" /><path d="M13 13v3M15 3l1-1M17 5l2-1" stroke="#222" strokeWidth="1.5" /></svg>
        </button>
        <label htmlFor="scale" className="mr-[3px] ml-[9px]">Maßstab</label>
        <span className="relative flex">
            <select id="scale" className="h-[22px] w-[91px] appearance-none border border-[#7a7a7a] bg-white pl-1 text-[13px]"><option>1:250</option></select>
            <svg viewBox="0 0 10 6" className="pointer-events-none absolute top-2 right-[6px] h-[6px] w-[10px]" fill="none" stroke="#555" strokeWidth="1.2"><path d="M.5.5L5 5 9.500.5" /></svg>
        </span>
        <button aria-label="Maßstab sperren" className="mx-[9px]">
            <svg viewBox="0 0 16 20" className="h-5 w-4"><path d="M3.500 9V6c0-6 9-6 9 0v3" fill="none" stroke="#888" strokeWidth="2" /><rect x="1" y="8.500" width="14" height="10.500" rx="1" fill="#666" /></svg>
        </button>
        <label htmlFor="zoom" className="mr-[3px]">Vergrößerung</label>
        <Spin id="zoom" value="100%" />
        <label htmlFor="turn" className="mr-[9px] ml-[9px]">Drehung</label>
        <Spin id="turn" value="0,0 °" />
        <span className="mr-[6px] ml-[5px] flex"><Check id="draw" checked /></span>
        <label htmlFor="draw">Zeichnen</label>
        <button className="ml-4 flex items-center gap-[5px] text-[13px]">
            <svg viewBox="0 0 20 20" className="size-[19px]" fill="none" stroke="#6b6b6b" strokeWidth="1.3"><circle cx="10" cy="9" r="8" fill="#bdbdbd" /><ellipse cx="10" cy="9" rx="4" ry="8" /><path d="M0 9h20M3 5h14M3 13h14M10 1v18M6 19h8" /></svg>
            EPSG:25832
        </button>
        <button aria-label="Meldungen" className="ml-[17px]">
            <svg viewBox="0 0 20 20" className="size-5"><path d="M10 1c6 0 10 3 10 8 0 3-1 5-3 6l1 4-5-3c-8 1-13-2-13-7S4 1 10 1z" fill="#6e6e6e" /><path d="M4.500 9h2M9 9h2M13.500 9h2" stroke="#fff" strokeWidth="2.200" /></svg>
        </button>
        <button aria-label="Erweiterungen" className="ml-3">
            <svg viewBox="0 0 24 20" className="h-5 w-6"><path d="M1 4h5c-2-4 5-4 4 0h5v4c3-2 4 3 1 4v6h-6c1-4-4-4-3 0H1v-5c4 1 4-5 0-4z" fill="#aaa" stroke="#666" /><path d="M14 9c5 1 8-1 8-5l-4 1" fill="none" stroke="#777" strokeWidth="2" /></svg>
        </button>
        <svg viewBox="0 0 12 12" className="mr-1 ml-1 size-3 self-end" fill="#bbb"><path d="M8 0h3v3H8zM4 4h3v3H4zM8 4h3v3H8zM0 8h3v3H0zM4 8h3v3H4zM8 8h3v3H8z" /></svg>
    </footer>
);

/* ---------- window ---------- */

const menus = ['Projekt', 'Bearbeiten', 'Ansicht', 'Layer', 'Einstellungen', 'Erweiterungen', 'Vektor', 'Raster', 'Datenbank', 'Web', 'Netz', 'Verarbeitung', 'Hilfe'];

const TitleBar = () => (
    <header className="flex h-[36px] shrink-0 items-center bg-white pl-[3px]">
        <svg viewBox="0 0 20 20" className="mr-[5px] size-5"><circle cx="9.500" cy="9.500" r="7.300" fill="#fff" stroke="#63a02d" strokeWidth="4" /><path d="M9 9h4l7 7v4h-4l-7-7z" fill="#579028" /><path d="M8 8h4l3 3-3 3-4-3z" fill="#f0a338" /></svg>
        <h1 className="flex-1 text-[15px]">*QGIS für Pilzfreunde 33.qgs - QGIS</h1>
        <div className="flex gap-[47px] pr-6">
            {['M0 6.500h12', 'M.5.5h11v11H.5z', 'M0 0l12 12M12 0L0 12'].map((d) => <button key={d} aria-label="Fenster"><svg viewBox="0 0 12 12" className="size-3" fill="none" stroke="#000" strokeWidth="1.1"><path d={d} /></svg></button>)}
        </div>
    </header>
);

export default function App() {
    return <div className="flex h-screen flex-col overflow-hidden border-l border-[#c01c28] bg-[#efefef] font-['Open_Sans','Noto_Sans',sans-serif] text-[14px] leading-5 text-black">
        <div className="flex h-[3px] shrink-0">
            <div className="flex-[27] border-b border-[#3c3450] bg-[#8a2d62]" />
            <div className="flex-[17] border-b border-[#a86a6e] bg-[#b3202c]" />
        </div>
        <div className="flex min-h-0 flex-1">
            <div className="flex min-w-0 flex-1 flex-col">
                <TitleBar />
                <nav className="flex h-[27px] shrink-0 items-center gap-4 bg-white pt-[2px] pl-[2px]">
                    {menus.map((m) => <button key={m}>{m}</button>)}
                </nav>
                {rows.map((row) => <div key={row} role="toolbar" className="flex h-[34px] shrink-0 items-center border-b border-[#b5b5b5] pl-[6px]">
                    {row.split(' ').map((item, i) => <ToolItem key={i} item={item} />)}
                </div>)}
                <div className="flex min-h-0 flex-1">
                    <SideBar />
                    <LayerPanel />
                    <MapCanvas />
                    <BrowserPanel />
                </div>
                <StatusBar />
            </div>
            <div className="w-[6px] shrink-0 border-r border-l border-r-[#e01020] border-l-[#666] bg-[#cfc8ca]" />
        </div>
        <div className="flex h-[7px] shrink-0 border-b-2 border-[#d31420]">
            <div className="flex-[27] border-y border-t-[#24607c] border-b-[#27323e] bg-linear-to-r from-[#0d86b5] to-[#1560a8]" />
            <div className="flex-[17] border-t border-b-2 border-t-[#666] border-b-[#4a2a30] bg-[#b9b9bd]" />
        </div>
    </div>;
}
